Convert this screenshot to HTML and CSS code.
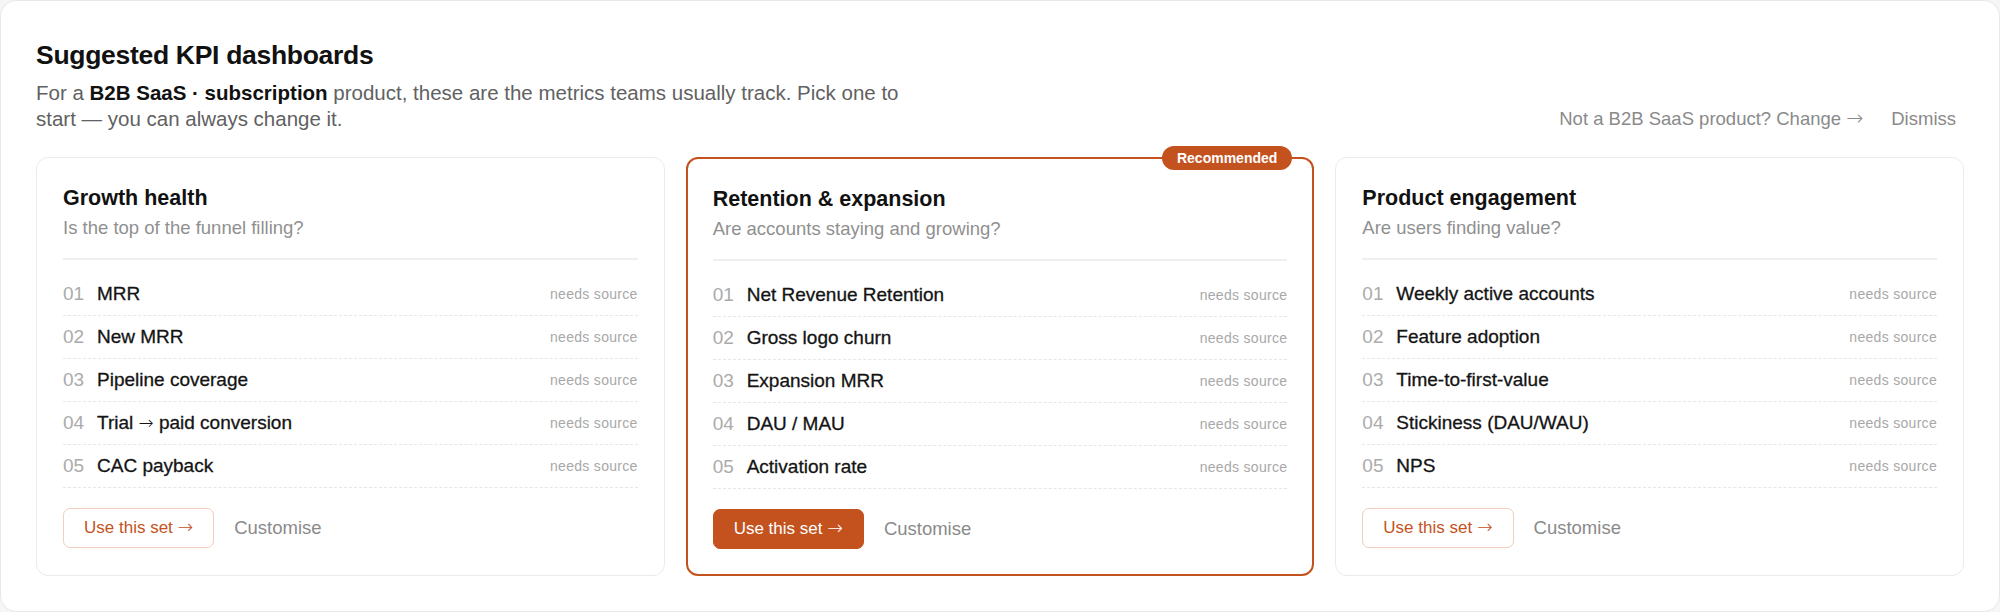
FILE: index.html
```html
<!DOCTYPE html>
<html lang="en">
<head>
    <meta charset="UTF-8" />
    <meta name="viewport" content="width=device-width, initial-scale=1.0"/>
    <title>Suggested KPI dashboards</title>
    <link rel="stylesheet" href="styles.css">
</head>
<body>
    <section class="kpi-panel">
        <header class="kpi-head">
            <div class="kpi-intro">
                <h1>Suggested KPI dashboards</h1>
                <p>For a <b>B2B SaaS · subscription</b> product, these are the metrics teams usually track. Pick one to start — you can always change it.</p>
            </div>
            <div class="kpi-head-actions">
                <button class="btn-link">Not a B2B SaaS product? Change <span class="arrow">→</span></button>
                <button class="btn-link">Dismiss</button>
            </div>
        </header>

        <div class="kpi-grid">
            <article class="kpi-card">
                <div class="card-head">
                    <h2>Growth health</h2>
                    <p>Is the top of the funnel filling?</p>
                </div>
                <ol class="metric-list">
                    <li class="metric-row"><span class="metric-num">01</span><span class="metric-name">MRR</span><span class="metric-status">needs source</span></li>
                    <li class="metric-row"><span class="metric-num">02</span><span class="metric-name">New MRR</span><span class="metric-status">needs source</span></li>
                    <li class="metric-row"><span class="metric-num">03</span><span class="metric-name">Pipeline coverage</span><span class="metric-status">needs source</span></li>
                    <li class="metric-row"><span class="metric-num">04</span><span class="metric-name">Trial <span class="arrow">→</span> paid conversion</span><span class="metric-status">needs source</span></li>
                    <li class="metric-row"><span class="metric-num">05</span><span class="metric-name">CAC payback</span><span class="metric-status">needs source</span></li>
                </ol>
                <div class="card-actions">
                    <button class="btn-outline">Use this set <span class="arrow">→</span></button>
                    <button class="btn-link">Customise</button>
                </div>
            </article>

            <article class="kpi-card is-recommended">
                <span class="badge">Recommended</span>
                <div class="card-head">
                    <h2>Retention &amp; expansion</h2>
                    <p>Are accounts staying and growing?</p>
                </div>
                <ol class="metric-list">
                    <li class="metric-row"><span class="metric-num">01</span><span class="metric-name">Net Revenue Retention</span><span class="metric-status">needs source</span></li>
                    <li class="metric-row"><span class="metric-num">02</span><span class="metric-name">Gross logo churn</span><span class="metric-status">needs source</span></li>
                    <li class="metric-row"><span class="metric-num">03</span><span class="metric-name">Expansion MRR</span><span class="metric-status">needs source</span></li>
                    <li class="metric-row"><span class="metric-num">04</span><span class="metric-name">DAU / MAU</span><span class="metric-status">needs source</span></li>
                    <li class="metric-row"><span class="metric-num">05</span><span class="metric-name">Activation rate</span><span class="metric-status">needs source</span></li>
                </ol>
                <div class="card-actions">
                    <button class="btn-primary">Use this set <span class="arrow">→</span></button>
                    <button class="btn-link">Customise</button>
                </div>
            </article>

            <article class="kpi-card">
                <div class="card-head">
                    <h2>Product engagement</h2>
                    <p>Are users finding value?</p>
                </div>
                <ol class="metric-list">
                    <li class="metric-row"><span class="metric-num">01</span><span class="metric-name">Weekly active accounts</span><span class="metric-status">needs source</span></li>
                    <li class="metric-row"><span class="metric-num">02</span><span class="metric-name">Feature adoption</span><span class="metric-status">needs source</span></li>
                    <li class="metric-row"><span class="metric-num">03</span><span class="metric-name">Time-to-first-value</span><span class="metric-status">needs source</span></li>
                    <li class="metric-row"><span class="metric-num">04</span><span class="metric-name">Stickiness (DAU/WAU)</span><span class="metric-status">needs source</span></li>
                    <li class="metric-row"><span class="metric-num">05</span><span class="metric-name">NPS</span><span class="metric-status">needs source</span></li>
                </ol>
                <div class="card-actions">
                    <button class="btn-outline">Use this set <span class="arrow">→</span></button>
                    <button class="btn-link">Customise</button>
                </div>
            </article>
        </div>
    </section>
</body>
</html>
```

FILE: styles.css
```css
* {
    box-sizing: border-box;
}

body {
    font-family: "Liberation Sans", Arial, sans-serif;
    margin: 0;
    padding: 0;
    background-color: #f6f6f6;
    color: #111111;
}

.kpi-panel {
    height: 612px;
    background: #ffffff;
    border: 1px solid #e8e8e8;
    border-radius: 16px;
    padding: 38px 35px 36px;
}

.kpi-head {
    display: flex;
    justify-content: space-between;
    align-items: flex-end;
    margin-bottom: 25px;
}

h1 {
    margin: 0;
    font-size: 26.5px;
    line-height: 32px;
    font-weight: 700;
    letter-spacing: -0.3px;
}

.kpi-intro p {
    margin: 9px 0 0;
    max-width: 890px;
    font-size: 20.5px;
    line-height: 26px;
    color: #616161;
}

.kpi-intro b {
    font-weight: 700;
    color: #111111;
}

.kpi-head-actions {
    display: flex;
    gap: 12px;
}

button {
    font-family: inherit;
    cursor: pointer;
}

.arrow {
    font-family: "DejaVu Sans", sans-serif;
    font-size: 1.1em;
    font-weight: 300;
    line-height: 1;
}

.btn-link {
    background: none;
    border: none;
    padding: 0 8px;
    font-size: 18.5px;
    line-height: 26px;
    color: #8a8a8a;
}

.kpi-grid {
    display: grid;
    grid-template-columns: repeat(3, 1fr);
    gap: 21px;
}

.kpi-card {
    position: relative;
    border: 1px solid #ebebeb;
    border-radius: 12px;
    padding: 26px;
    background: #ffffff;
}

.kpi-card.is-recommended {
    border: 2px solid #c4521e;
    padding: 26px 25px 25px;
}

.badge {
    position: absolute;
    top: -13px;
    right: 20px;
    background: #c4521e;
    color: #ffffff;
    font-size: 14px;
    font-weight: 700;
    line-height: 24px;
    padding: 0 15px;
    border-radius: 12px;
}

.card-head {
    padding-bottom: 19px;
    border-bottom: 2px solid #efefef;
}

.card-head h2 {
    margin: 0;
    font-size: 21.5px;
    line-height: 28px;
    font-weight: 700;
}

.card-head p {
    margin: 5px 0 0;
    font-size: 18.5px;
    line-height: 22px;
    color: #909090;
}

.metric-list {
    list-style: none;
    margin: 13px 0 0;
    padding: 0;
}

.metric-row {
    display: flex;
    align-items: center;
    height: 43px;
    border-bottom: 1px dashed #e6e6e6;
}

.metric-num {
    width: 34px;
    font-size: 19px;
    color: #ababab;
}

.metric-name {
    flex: 1;
    font-size: 19px;
    color: #141414;
    -webkit-text-stroke: 0.3px #141414;
}

.metric-name .arrow {
    font-size: 0.95em;
    -webkit-text-stroke: 0;
}

.metric-status {
    font-size: 14px;
    letter-spacing: 0.3px;
    color: #a8a8a8;
}

.card-actions {
    display: flex;
    align-items: center;
    gap: 12px;
    margin-top: 20px;
}

.btn-outline,
.btn-primary {
    height: 40px;
    padding: 0 20px;
    border-radius: 7px;
    font-size: 17px;
}

.btn-outline {
    background: #ffffff;
    border: 1px solid #f3cdbd;
    color: #c4521e;
}

.btn-primary {
    background: #c4521e;
    border: 1px solid #c4521e;
    color: #ffffff;
}
```
